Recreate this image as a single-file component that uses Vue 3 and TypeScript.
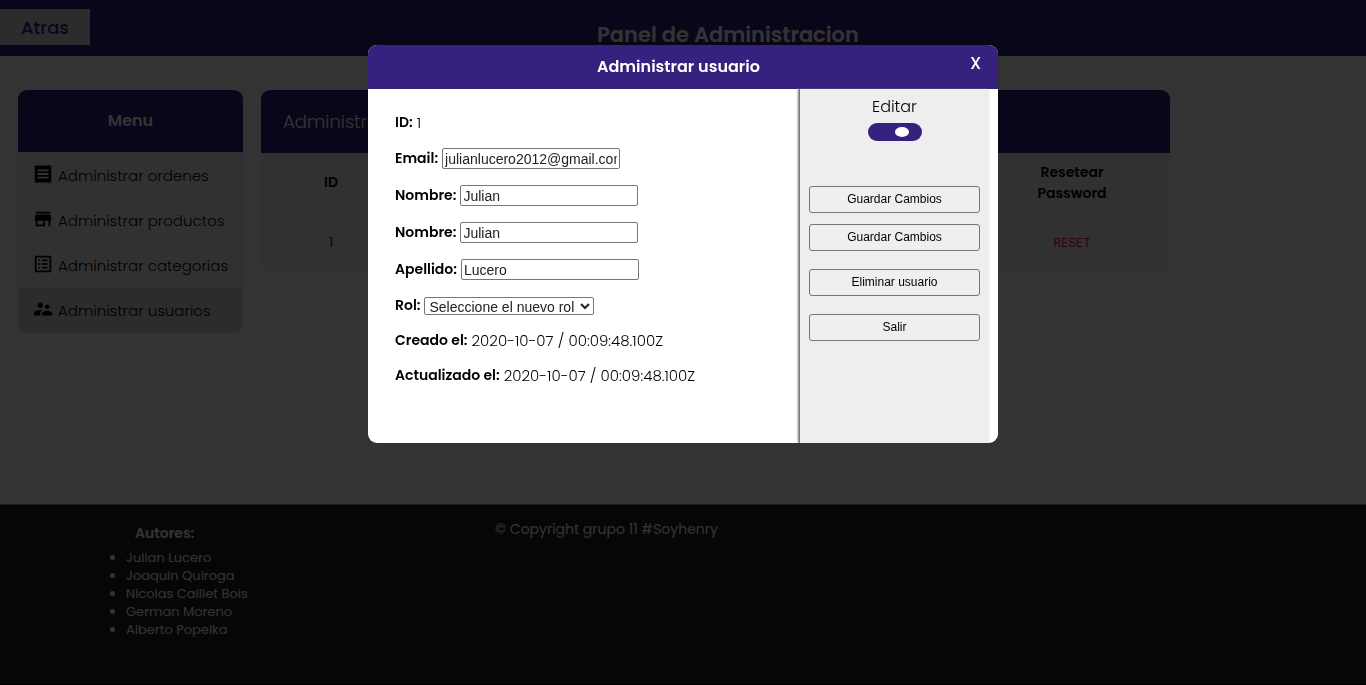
<script setup lang="ts">
import { ref } from 'vue'

const menu = [
  { label: 'Administrar ordenes', icon: 'M18 17H6v-2h12v2zm0-4H6v-2h12v2zm0-4H6V7h12v2zM3 22l1.5-1.5L6 22l1.5-1.5L9 22l1.5-1.5L12 22l1.5-1.5L15 22l1.5-1.5L18 22l1.5-1.5L21 22V2l-1.500 1.500L18 2l-1.500 1.500L15 2l-1.500 1.500L12 2l-1.500 1.500L9 2 7.500 3.500 6 2 4.500 3.500 3 2v20z', active: false },
  { label: 'Administrar productos', icon: 'M20 4H4v2h16V4zm1 10v-2l-1-5H4l-1 5v2h1v6h10v-6h4v6h2v-6h1zm-9 4H6v-4h6v4z', active: false },
  { label: 'Administrar categorias', icon: 'M19 5v14H5V5h14m1.100-2H3.900c-.5 0-.9.4-.9.9v16.200c0 .4.4.9.9.9h16.200c.4 0 .9-.5.9-.9V3.900c0-.5-.5-.9-.9-.9zM11 7h6v2h-6V7zm0 4h6v2h-6v-2zm0 4h6v2h-6zM7 7h2v2H7zm0 4h2v2H7zm0 4h2v2H7z', active: false },
  { label: 'Administrar usuarios', icon: 'M16.500 12c1.380 0 2.490-1.120 2.490-2.500S17.880 7 16.500 7C15.120 7 14 8.120 14 9.500s1.120 2.500 2.500 2.500zM9 11c1.660 0 2.990-1.340 2.990-3S10.660 5 9 5C7.340 5 6 6.340 6 8s1.340 3 3 3zm7.500 3c-1.830 0-5.500.92-5.500 2.750V19h11v-2.250c0-1.830-3.670-2.750-5.500-2.750zM9 13c-2.330 0-7 1.170-7 3.500V19h7v-2.250c0-.85.33-2.340 2.370-3.470C10.500 13.100 9.660 13 9 13z', active: true },
]
const authors = ['Julian Lucero', 'Joaquin Quiroga', 'Nicolas Caillet Bois', 'German Moreno', 'Alberto Popelka']

const editing = ref(true)
const email = ref('julianlucero2012@gmail.com')
const firstName = ref('Julian')
const displayName = ref('Julian')
const lastName = ref('Lucero')
const role = ref('')
</script>

<template>
  <div class="page">
    <header class="topbar">
      <button class="back" type="button">Atras</button>
      <h1>Panel de Administracion</h1>
    </header>

    <main class="content">
      <nav class="card menu">
        <h2>Menu</h2>
        <a v-for="item in menu" :key="item.label" href="#" :class="['menu-item', { active: item.active }]">
          <svg viewBox="0 0 24 24" aria-hidden="true"><path :d="item.icon" /></svg>
          <span>{{ item.label }}</span>
        </a>
      </nav>

      <section class="card users">
        <h2>Administrar</h2>
        <table>
          <thead>
            <tr><th class="col-id">ID</th><td></td><th class="col-reset">Resetear<br>Password</th></tr>
          </thead>
          <tbody>
            <tr><td>1</td><td></td><td><button class="reset" type="button">RESET</button></td></tr>
          </tbody>
        </table>
      </section>
    </main>

    <footer class="footer">
      <div class="authors">
        <h3>Autores:</h3>
        <ul><li v-for="name in authors" :key="name">{{ name }}</li></ul>
      </div>
      <p>© Copyright grupo 11 #Soyhenry</p>
    </footer>
  </div>

  <div class="overlay">
    <div class="modal" role="dialog" aria-labelledby="modal-title">
      <div class="modal-head">
        <h2 id="modal-title">Administrar usuario</h2>
        <button class="close" type="button">X</button>
      </div>
      <div class="modal-body">
        <form class="fields">
          <p class="row"><b>ID:</b> <span>1</span></p>
          <p class="row field"><label for="email">Email:</label> <input id="email" v-model="email" type="text"></p>
          <p class="row field"><label for="first">Nombre:</label> <input id="first" v-model="firstName" type="text"></p>
          <p class="row field"><label for="display">Nombre:</label> <input id="display" v-model="displayName" type="text"></p>
          <p class="row field"><label for="last">Apellido:</label> <input id="last" v-model="lastName" type="text"></p>
          <p class="row">
            <label for="role">Rol:</label>
            <select id="role" v-model="role"><option value="">Seleccione el nuevo rol</option></select>
          </p>
          <p class="row"><b>Creado el:</b> <span>2020-10-07 / 00:09:48.100Z</span></p>
          <p class="row"><b>Actualizado el:</b> <span>2020-10-07 / 00:09:48.100Z</span></p>
        </form>
        <aside class="actions">
          <label for="edit">Editar</label>
          <input id="edit" v-model="editing" class="switch" type="checkbox">
          <div class="buttons">
            <button type="button">Guardar Cambios</button>
            <button type="button">Guardar Cambios</button>
            <button class="spaced" type="button">Eliminar usuario</button>
            <button class="spaced" type="button">Salir</button>
          </div>
        </aside>
      </div>
    </div>
  </div>
</template>

<style>
html, body { background: #fff; }
body { margin: 0; }
</style>

<style scoped>
.page, .overlay { font-family: Poppins, Inter, sans-serif; font-size: 15px; font-weight: 300; color: #000; }
.page *, .overlay * { box-sizing: border-box; }
h1, h2, h3, p, ul { margin: 0; }
.page { display: flex; flex-direction: column; min-height: 100vh; background: #fff; }

.topbar { display: grid; grid-template-columns: 90px 1fr; align-items: start; height: 56px; padding-top: 9px; box-sizing: border-box; background: #36217f; }
.back { height: 36px; padding: 0; border: 0; background: #dcdcdf; color: #36217f; font: 500 18px Poppins, Inter, sans-serif; }
.topbar h1 { padding-top: 10px; text-align: center; color: #fff; font-size: 21px; line-height: 32px; font-weight: 600; }

.content { flex: 1; display: grid; grid-template-columns: 225px 1fr; align-items: start; gap: 18px; padding: 34px 196px 0 18px; }
.card { border-radius: 9px; overflow: hidden; background: #f5f5f5; }
.card h2 { line-height: 63px; background: #36217f; color: #fff; font-size: 18px; font-weight: 300; }
.menu h2 { margin-bottom: 1px; text-align: center; font-size: 16px; line-height: 62px; font-weight: 600; }
.menu-item { display: flex; align-items: center; gap: 4px; height: 45px; padding: 0 14px; color: #000; text-decoration: none; white-space: nowrap; }
.menu-item svg { flex: none; width: 22px; height: 22px; margin-bottom: 4px; }
.menu-item.active { background: #d9d9d9; }
.users h2 { padding-left: 22px; }
table { width: 100%; border-collapse: collapse; table-layout: fixed; text-align: center; }
th, td { height: 59px; padding: 0; line-height: 21px; }
th { font-size: 14px; font-weight: 600; }
.col-id { width: 140px; }
.col-reset { width: 196px; }
.reset { padding: 0; border: 0; background: none; color: #f50057; font: 400 12px Inter, sans-serif; }

.footer { display: grid; grid-template-columns: 360px 1fr; gap: 27px; height: 181px; padding: 15px 108px 0; box-sizing: border-box; border-top: 1px solid #5c9c5c; border-bottom: 1px solid #000; background: #222; color: #fff; font-weight: 400; }
.footer h3 { padding-left: 27px; font-size: 14px; line-height: 27px; font-weight: 600; }
.footer ul { padding-left: 18px; margin-top: 2px; font-size: 13px; line-height: 18px; }
.footer p { font-size: 14px; line-height: 18px; }

.overlay { position: fixed; inset: 0; display: flex; justify-content: center; align-items: flex-start; padding-top: 45px; background: rgba(0, 0, 0, 0.8); }
.modal { width: 630px; border-radius: 9px; overflow: hidden; background: #fff; }
.modal-head { display: grid; grid-template-columns: 45px 1fr 45px; height: 44px; background: #36217f; color: #fff; }
.modal-head h2 { grid-column: 2; padding-right: 9px; text-align: center; font-size: 16px; line-height: 44px; font-weight: 600; }
.close { height: 36px; padding: 0; border: 0; background: none; color: #fff; font: 500 17px Poppins, Inter, sans-serif; }
.modal-body { display: grid; grid-template-columns: 1fr 190px; min-height: 354px; padding-right: 9px; }
.fields { display: flex; flex-direction: column; gap: 14px; padding: 23px 27px 22px; }
.row { display: flex; align-items: center; gap: 4px; height: 21px; white-space: nowrap; }
.field { height: 23px; }
.row b, .row label { font-size: 14px; font-weight: 600; }
.row input { width: 178px; height: 21px; padding: 1px 2px; border: 1px solid #767676; border-radius: 2px; background: #fff; color: #222; font: 14px "Liberation Sans", Arial, sans-serif; }
.row select { width: 170px; height: 18px; padding: 0; border: 1px solid #767676; border-radius: 2px; background: #fff; color: #222; font: 14px "Liberation Sans", Arial, sans-serif; line-height: 16px; }
.actions { display: flex; flex-direction: column; align-items: center; padding: 4px 9px 0; border-left: 1px solid #777; box-shadow: -1px 0 2px #777; background: #eee; }
.actions label { font-size: 16px; line-height: 27px; }
.switch { appearance: none; display: flex; align-items: center; justify-content: flex-end; width: 54px; height: 18px; margin: 3px 0 45px; padding-right: 13px; border-radius: 9px; background: #36217f; }
.switch::before { content: ""; width: 14px; height: 10px; border-radius: 50%; background: #fff; }
.switch:not(:checked) { justify-content: flex-start; padding: 0 0 0 13px; }
.buttons { display: flex; flex-direction: column; gap: 11px; width: 100%; }
.buttons button { height: 27px; padding: 0 0 2px; border: 1px solid #767676; border-radius: 3px; background: #efefef; color: #000; font: 12px "Liberation Sans", Arial, sans-serif; }
.buttons .spaced { margin-top: 7px; }
</style>
